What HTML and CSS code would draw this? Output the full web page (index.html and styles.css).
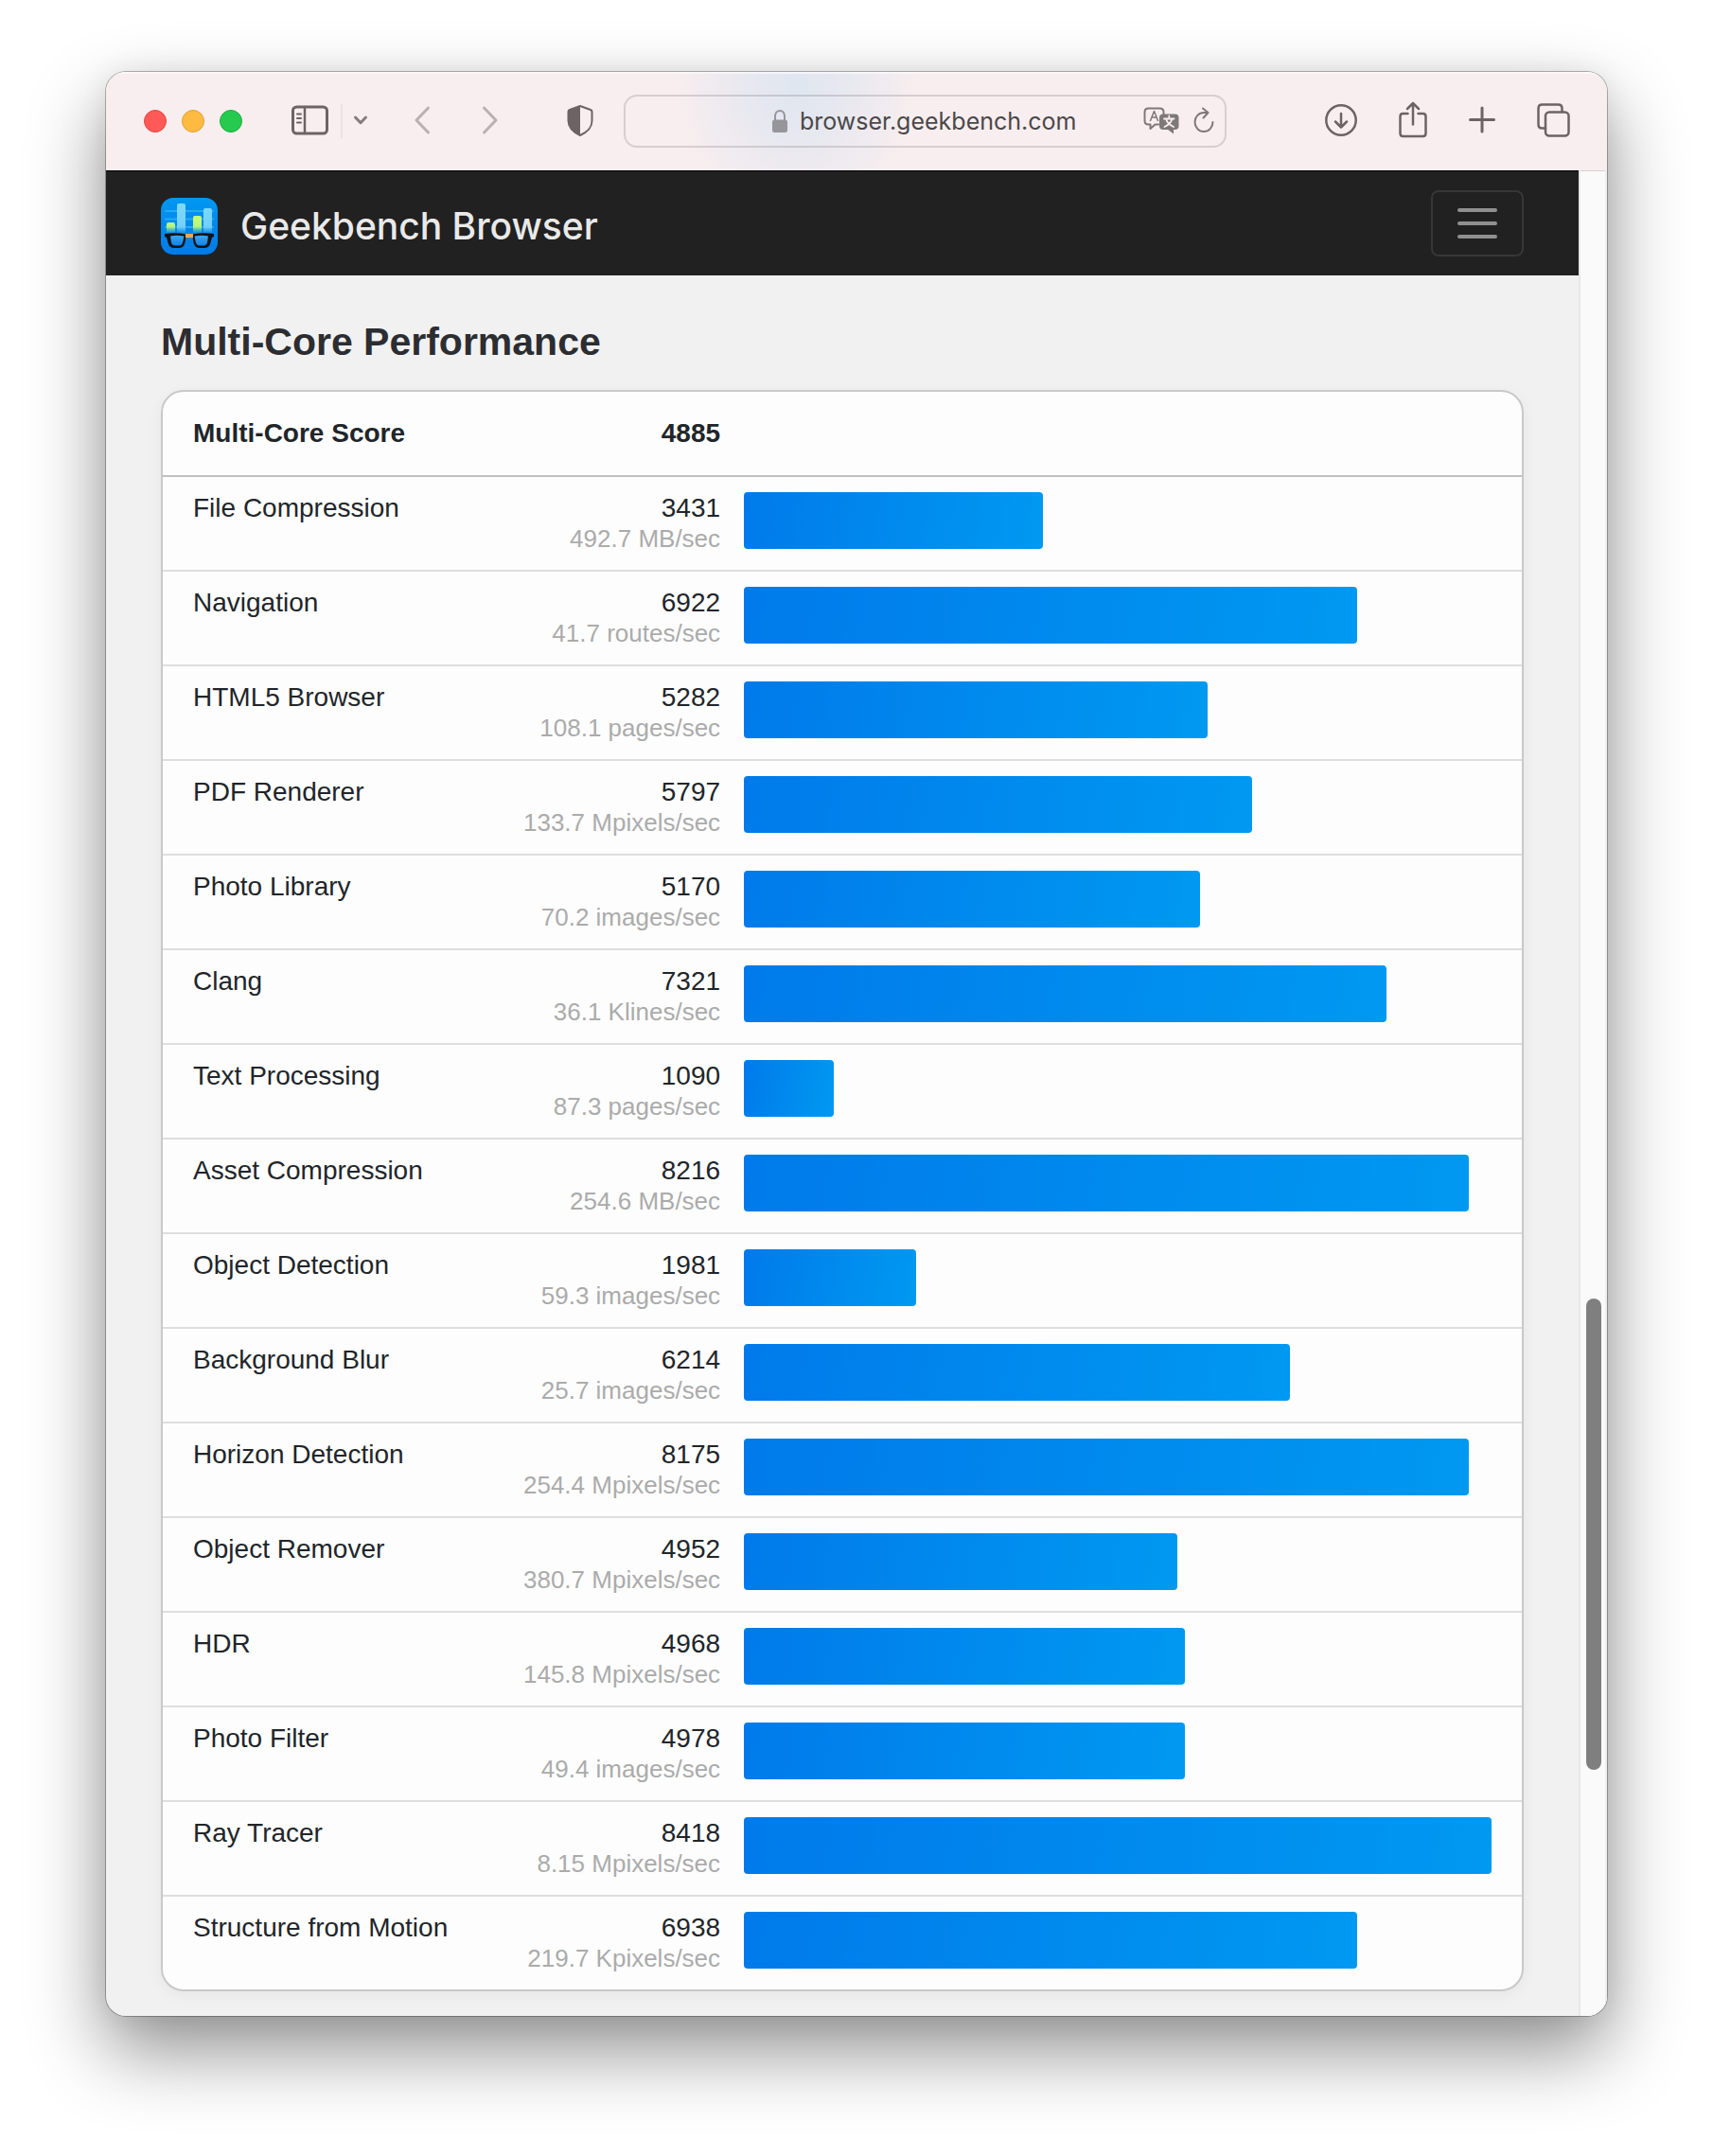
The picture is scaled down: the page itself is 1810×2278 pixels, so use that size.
FILE: index.html
```html
<!DOCTYPE html>
<html lang="en">
<head>
<meta charset="utf-8">
<meta name="viewport" content="width=device-width, initial-scale=1">
<title>Geekbench Browser</title>
<link rel="stylesheet" href="styles.css">
</head>
<body>
<div class="window">
  <header class="toolbar">
    <div class="lights">
      <button class="light light-close" type="button" aria-label="Close"></button>
      <button class="light light-minimise" type="button" aria-label="Minimise"></button>
      <button class="light light-zoom" type="button" aria-label="Zoom"></button>
    </div>
    <div class="sidebar-tools">
      <button class="tool" type="button" aria-label="Show sidebar">
        <svg width="40" height="34" viewBox="0 0 40 34"><rect x="1.500" y="2" width="36" height="28" rx="4" class="line"/><path d="M14 2v28" class="line mid"/><path d="M6 9.500h4M6 14h4M6 18.500h4" class="line thin"/></svg>
      </button>
      <span class="divider"></span>
      <button class="tool" type="button" aria-label="Tab groups">
        <svg width="14" height="14" viewBox="0 0 14 14"><path d="M1.500 3 7 8.700 12.500 3" class="line soft"/></svg>
      </button>
    </div>
    <div class="history">
      <button class="tool" type="button" aria-label="Back">
        <svg width="18" height="34" viewBox="0 0 18 34"><path d="M15.500 3 3 16l12.500 13" class="line faint"/></svg>
      </button>
      <button class="tool" type="button" aria-label="Forward">
        <svg width="18" height="34" viewBox="0 0 18 34"><path d="M2.500 3 15 16 2.500 29" class="line faint"/></svg>
      </button>
    </div>
    <button class="tool" type="button" aria-label="Privacy report">
      <svg width="28" height="36" viewBox="0 0 28 36"><path d="M14 2 25 6q1.500.5 1.500 2v9.500c0 8-5 12-12.500 15.500C6.500 29.500 1.500 25.500 1.500 17.500V8q0-1.500 1.500-2z" class="line thin"/><path d="M14 2 3 6Q1.500 6.500 1.500 8v9.500c0 8 5 12 12.500 15.500z" class="fill"/></svg>
    </button>
    <div class="address">
      <span class="address-site">
        <svg width="18" height="26" viewBox="0 0 18 26"><rect x="1" y="11.500" width="16" height="13.500" rx="2.500" class="lock"/><path d="M4 12V8c0-8 10-8 10 0v4" class="lock-ring"/></svg>
        <span>browser.geekbench.com</span>
      </span>
      <span class="address-tools">
        <button class="tool" type="button" aria-label="Translate">
          <svg width="38" height="30" viewBox="0 0 38 30"><path d="M16 18.500h-3.500L7.500 23v-4.500H5.500Q1.500 18.500 1.500 14.500v-9q0-4 4-4h12q4 0 4 4V8" class="line grey"/><path d="m7.500 14.500 4-10 4 10M9 11h5" class="line grey hair"/><rect x="17" y="7.500" width="20.500" height="16.500" rx="4" class="grey-fill"/><path d="M25.500 23.500 32 28.500V23z" class="grey-fill"/><path d="M27.300 9.500v2.500M22 12.500h10.500M24 12.500q1.500 5.500 8 8.500M30.500 12.500q-1.500 5.500-8 8.500" class="line white"/></svg>
        </button>
        <button class="tool" type="button" aria-label="Reload">
          <svg width="24" height="30" viewBox="0 0 24 30"><path d="M21.500 16a9.500 10 0 1 1-9.500-10h4.500M11 1.500 16.500 6 11.500 11.500" class="line grey"/></svg>
        </button>
      </span>
    </div>
    <div class="actions">
      <button class="tool" type="button" aria-label="Downloads">
        <svg width="34" height="38" viewBox="0 0 34 38"><circle cx="17" cy="18" r="15.700" class="line mid"/><path d="M17 11v14M11 19.500l6 6 6-6" class="line mid"/></svg>
      </button>
      <button class="tool" type="button" aria-label="Share">
        <svg width="30" height="42" viewBox="0 0 30 42"><path d="M9.500 13H4.500q-3 0-3 3v18q0 3 3 3h21q3 0 3-3V16q0-3-3-3h-5M15 24.500V2.500M9 8l6-6 6 6" class="line mid"/></svg>
      </button>
      <button class="tool" type="button" aria-label="New tab">
        <svg width="28" height="32" viewBox="0 0 28 32"><path d="M14 2v25M1.500 14.500h25" class="line"/></svg>
      </button>
      <button class="tool" type="button" aria-label="Tab overview">
        <svg width="35" height="38" viewBox="0 0 35 38"><rect x="9" y="9.500" width="24.500" height="25" rx="4" class="line mid"/><path d="M9 26.500H5.500q-4 0-4-4v-17q0-4 4-4h17q4 0 4 4v3.500" class="line mid"/></svg>
      </button>
    </div>
  </header>

  <div class="viewport">
    <div class="page">
      <nav class="navbar">
        <a class="brand" href="#">
          <svg width="60" height="60" viewBox="0 0 60 60" aria-hidden="true">
            <defs>
              <linearGradient id="tile" x1="0" y1="0" x2="0" y2="1"><stop offset="0" stop-color="#0098f0"/><stop offset="1" stop-color="#007ae8"/></linearGradient>
              <linearGradient id="sky" gradientUnits="userSpaceOnUse" x1="0" y1="6" x2="0" y2="38"><stop offset="0" stop-color="#7ddafc"/><stop offset=".75" stop-color="#74d0fa"/><stop offset="1" stop-color="#74d0fa" stop-opacity="0"/></linearGradient>
              <linearGradient id="lime" gradientUnits="userSpaceOnUse" x1="0" y1="18" x2="0" y2="38"><stop offset="0" stop-color="#c6fb74"/><stop offset=".6" stop-color="#b5f77c"/><stop offset="1" stop-color="#8ee88c" stop-opacity="0"/></linearGradient>
              <linearGradient id="lens" x1="0" y1="0" x2="0" y2="1"><stop offset="0" stop-color="#3ca6f3"/><stop offset="1" stop-color="#0f82e8"/></linearGradient>
            </defs>
            <rect width="60" height="60" rx="13" fill="url(#tile)"/>
            <path d="M5 14h50M5 22.500h50M5 31h50" stroke="#2ba8f5" stroke-width="2" stroke-linecap="round"/>
            <path d="M17 38V8q0-2 2-2h5q2 0 2 2v30zM45 38V13q0-2 2-2h5q2 0 2 2v25z" fill="url(#sky)"/>
            <path d="M6 38V28q0-2 2-2h5q2 0 2 2v10zM34 38V21q0-2 2-2h5q2 0 2 2v17z" fill="url(#lime)"/>
            <path d="M4 38q12-1.500 22 .5h8q10-2 22-.5v3l-2 1-2 7q-1.500 4-6 4h-5q-4.500 0-6-4l-1.500-6.500h-7L25 49q-1.500 4-6 4h-5q-4.500 0-6-4l-2-7-2-1z" fill="#101418"/>
            <path d="M10 40.500q6-1.500 14.500 0l-1.500 7q-1 3-4 3h-4q-3 0-4-3zM50 40.500q-6-1.500-14.500 0l1.500 7q1 3 4 3h4q3 0 4-3z" fill="url(#lens)"/>
            <path d="M26 38h8v4.500h-8z" fill="#f0a35c"/>
          </svg>
          <span>Geekbench Browser</span>
        </a>
        <button class="menu-button" type="button" aria-label="Toggle navigation">
          <svg width="42" height="32" viewBox="0 0 42 32"><path d="M2 2h38M2 16h38M2 30h38" stroke="#909090" stroke-width="4" stroke-linecap="round"/></svg>
        </button>
      </nav>

      <main class="content">
        <h1 class="title">Multi-Core Performance</h1>
        <div class="card">
          <table class="scores">
            <thead>
              <tr><th class="name" scope="col">Multi-Core Score</th><th class="score" scope="col">4885</th><td class="chart"></td></tr>
            </thead>
            <tbody>
              <tr><td class="name">File Compression</td><td class="score">3431<span class="rate">492.7 MB/sec</span></td><td class="chart"><div class="bar" style="width:40%"></div></td></tr>
              <tr><td class="name">Navigation</td><td class="score">6922<span class="rate">41.7 routes/sec</span></td><td class="chart"><div class="bar" style="width:82%"></div></td></tr>
              <tr><td class="name">HTML5 Browser</td><td class="score">5282<span class="rate">108.1 pages/sec</span></td><td class="chart"><div class="bar" style="width:62%"></div></td></tr>
              <tr><td class="name">PDF Renderer</td><td class="score">5797<span class="rate">133.7 Mpixels/sec</span></td><td class="chart"><div class="bar" style="width:68%"></div></td></tr>
              <tr><td class="name">Photo Library</td><td class="score">5170<span class="rate">70.2 images/sec</span></td><td class="chart"><div class="bar" style="width:61%"></div></td></tr>
              <tr><td class="name">Clang</td><td class="score">7321<span class="rate">36.1 Klines/sec</span></td><td class="chart"><div class="bar" style="width:86%"></div></td></tr>
              <tr><td class="name">Text Processing</td><td class="score">1090<span class="rate">87.3 pages/sec</span></td><td class="chart"><div class="bar" style="width:12%"></div></td></tr>
              <tr><td class="name">Asset Compression</td><td class="score">8216<span class="rate">254.6 MB/sec</span></td><td class="chart"><div class="bar" style="width:97%"></div></td></tr>
              <tr><td class="name">Object Detection</td><td class="score">1981<span class="rate">59.3 images/sec</span></td><td class="chart"><div class="bar" style="width:23%"></div></td></tr>
              <tr><td class="name">Background Blur</td><td class="score">6214<span class="rate">25.7 images/sec</span></td><td class="chart"><div class="bar" style="width:73%"></div></td></tr>
              <tr><td class="name">Horizon Detection</td><td class="score">8175<span class="rate">254.4 Mpixels/sec</span></td><td class="chart"><div class="bar" style="width:97%"></div></td></tr>
              <tr><td class="name">Object Remover</td><td class="score">4952<span class="rate">380.7 Mpixels/sec</span></td><td class="chart"><div class="bar" style="width:58%"></div></td></tr>
              <tr><td class="name">HDR</td><td class="score">4968<span class="rate">145.8 Mpixels/sec</span></td><td class="chart"><div class="bar" style="width:59%"></div></td></tr>
              <tr><td class="name">Photo Filter</td><td class="score">4978<span class="rate">49.4 images/sec</span></td><td class="chart"><div class="bar" style="width:59%"></div></td></tr>
              <tr><td class="name">Ray Tracer</td><td class="score">8418<span class="rate">8.15 Mpixels/sec</span></td><td class="chart"><div class="bar" style="width:100%"></div></td></tr>
              <tr><td class="name">Structure from Motion</td><td class="score">6938<span class="rate">219.7 Kpixels/sec</span></td><td class="chart"><div class="bar" style="width:82%"></div></td></tr>
            </tbody>
          </table>
        </div>
      </main>
    </div>
    <div class="scrollbar" aria-hidden="true"><div class="thumb"></div></div>
  </div>
</div>
</body>
</html>
```
FILE: styles.css
```css
* { box-sizing: border-box; }

body {
  margin: 0;
  padding: 75px 111px 147px;
  background: #fff;
  color: #212529;
  font-family: "Liberation Sans", Arial, sans-serif;
  font-size: 28px;
  line-height: 32px;
}

svg { display: block; overflow: visible; }

button { padding: 0; border: 0; background: none; font: inherit; }

.window {
  border: 1px solid rgba(0, 0, 0, .28);
  border-radius: 22px;
  background: #f1f1f1;
  background-clip: padding-box;
  box-shadow: 0 36px 80px rgba(0, 0, 0, .44), 0 0 30px rgba(0, 0, 0, .06);
  overflow: hidden;
}

/* Browser toolbar */
.toolbar {
  display: flex;
  align-items: center;
  height: 104px;
  padding: 0 39px 0 40px;
  background:
    radial-gradient(ellipse 130px 140px at 730px 16px, #dfe6f0 0%, rgba(226, 230, 240, .75) 40%, rgba(240, 238, 238, 0) 100%),
    #f8eeef;
  box-shadow: inset 0 2px 0 rgba(255, 255, 255, .6);
}

.lights { display: flex; gap: 16px; }
.light { width: 24px; height: 24px; border: 1px solid; border-radius: 50%; }
.light-close { background: #ff5a57; border-color: #e6453f; }
.light-minimise { background: #ffbb41; border-color: #e3a032; }
.light-zoom { background: #26ca4f; border-color: #16b03a; }

.sidebar-tools { display: flex; align-items: center; gap: 12px; margin-left: 52px; }
.divider { width: 2px; height: 36px; background: #ebe1e3; }
.history { display: flex; gap: 54px; margin: 0 72px 0 49px; }

.line { fill: none; stroke: #6d6364; stroke-width: 3; stroke-linecap: round; stroke-linejoin: round; }
.thin { stroke-width: 2; }
.mid { stroke-width: 2.5; }
.soft { stroke: #857b7d; }
.faint { stroke: #b9b0b1; }
.grey { stroke: #7e7878; stroke-width: 2; }
.hair { stroke-width: 1.5; }
.white { stroke: #f8eeef; stroke-width: 1.8; }
.fill { fill: #6d6364; }
.grey-fill { fill: #7e7878; }
.lock { fill: #96969a; }
.lock-ring { fill: none; stroke: #96969a; stroke-width: 2; }

.address {
  display: flex;
  align-items: center;
  flex: 1;
  height: 56px;
  margin: 0 104px 0 32px;
  padding: 0 10px 0 154px;
  border: 2px solid rgba(90, 80, 85, .2);
  border-radius: 14px;
  color: #4b4849;
  font-family: Inter, sans-serif;
  font-size: 25px;
}
.address-site { display: flex; align-items: center; gap: 12px; }
.address-tools { display: flex; gap: 14px; margin-left: auto; }
.actions { display: flex; align-items: center; gap: 44px; }

/* Page area */
.viewport { display: flex; }
.page { flex: 1; min-width: 0; }

.scrollbar {
  display: grid;
  grid-template-rows: 1192fr 498fr 260fr;
  width: 30px;
  padding: 0 4px 0 6px;
  border-left: 2px solid #e8e8e8;
  border-right: 2px solid #eee;
  background: #fafafa;
  box-shadow: inset 0 1px 0 #d8d0d1;
}
.thumb { grid-row: 2; border-radius: 8px; background: #7f7f7f; }

.navbar {
  display: flex;
  align-items: center;
  justify-content: space-between;
  padding: 20px 58px;
  border-top: 1px solid #000;
  background: #212121;
}
.brand {
  display: flex;
  align-items: center;
  gap: 24px;
  padding-top: 6px;
  color: #e9e9e9;
  font-family: Inter, sans-serif;
  font-size: 39px;
  font-weight: 500;
  line-height: 48px;
  text-decoration: none;
}
.menu-button {
  display: flex;
  align-items: center;
  justify-content: center;
  width: 98px;
  height: 70px;
  border: 2px solid #373737;
  border-radius: 8px;
}

.content { padding: 46px 58px 26px; }
.title {
  margin: 0 0 27px;
  color: #2c2d31;
  font-size: 41px;
  line-height: 48px;
}

.card {
  border: 2px solid #c9c9c9;
  border-radius: 24px;
  background: #fdfdfd;
  box-shadow: 0 4px 16px rgba(0, 0, 0, .05);
  overflow: hidden;
}

.scores { width: 100%; border-spacing: 0; table-layout: fixed; }
.scores th, .scores td { padding: 17px 14px 17px 12px; vertical-align: top; }
.scores .name { width: 22%; padding-left: 32px; text-align: left; }
.scores .score { width: 20%; text-align: right; }
.scores .chart { padding: 16px 32px 16px 11px; }

.scores thead th { padding-top: 28px; padding-bottom: 28px; font-weight: 700; }
.scores thead th, .scores thead td { border-bottom: 2px solid #c0c0c0; }
.scores tbody td { border-bottom: 2px solid #dedede; }
.scores tbody tr:last-child td { border-bottom: 0; }

.rate { display: block; color: #ababab; font-size: 26px; }
.bar {
  height: 60px;
  border-radius: 4px;
  background: linear-gradient(100deg, #007aea, #0099f1);
}
```
